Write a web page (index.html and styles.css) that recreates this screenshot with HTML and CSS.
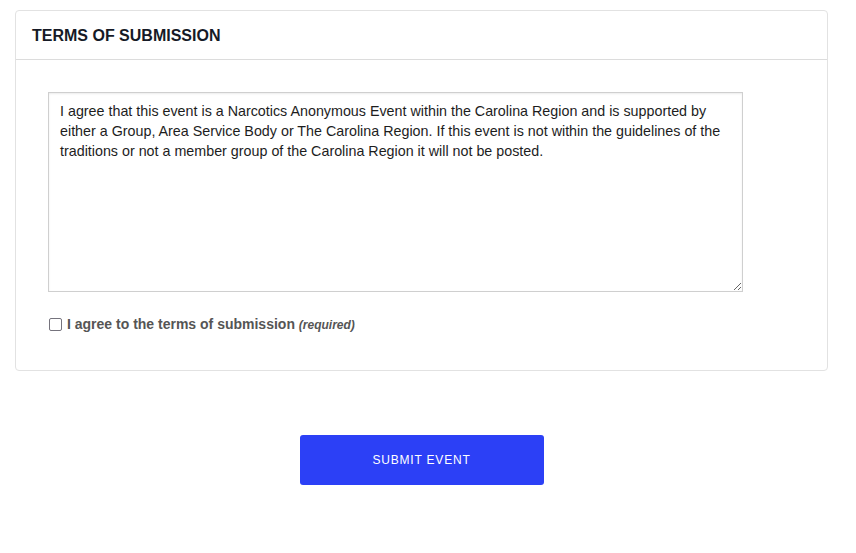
FILE: index.html
```html
<!DOCTYPE html>
<html>
<head>
<meta charset="utf-8">
<link rel="stylesheet" href="styles.css">
</head>
<body>
<div class="page">
  <section class="card">
    <header class="card-header">
      <h2 class="card-title">TERMS OF SUBMISSION</h2>
    </header>
    <div class="card-body">
      <textarea class="terms" readonly>I agree that this event is a Narcotics Anonymous Event within the Carolina Region and is supported by either a Group, Area Service Body or The Carolina Region. If this event is not within the guidelines of the traditions or not a member group of the Carolina Region it will not be posted.</textarea>
      <label class="agree">
        <span class="box"></span>
        <span class="agree-text">I agree to the terms of submission <em class="req">(required)</em></span>
      </label>
    </div>
  </section>
  <div class="actions">
    <button class="submit" type="button">SUBMIT EVENT</button>
  </div>
</div>
</body>
</html>
```
FILE: styles.css
```css
html, body {
  margin: 0;
  padding: 0;
  background: #fff;
}
body {
  font-family: "Liberation Sans", Arial, Helvetica, sans-serif;
  color: #222;
}
.page {
  padding: 10px 28px 0 15px;
}
.card {
  border: 1px solid #e2e2e2;
  border-radius: 4px;
  background: #fff;
}
.card-header {
  height: 48px;
  border-bottom: 1px solid #dcdcdc;
  display: flex;
  align-items: center;
  padding: 1px 16px 0;
  box-sizing: border-box;
  height: 49px;
}
.card-title {
  margin: 0;
  font-size: 16px;
  font-weight: 700;
  color: #161a26;
  letter-spacing: 0;
}
.card-body {
  padding: 32px 32px 37px 32px;
  display: flex;
  flex-direction: column;
  align-items: flex-start;
}
.terms {
  box-sizing: border-box;
  width: 695px;
  height: 200px;
  border: 1px solid #cfcfcf;
  box-shadow: inset 0 1px 2px rgba(0,0,0,0.08);
  padding: 8px 11px;
  font-family: "Liberation Sans", Arial, Helvetica, sans-serif;
  font-size: 14.3px;
  line-height: 20px;
  color: #1d1d1d;
  resize: both;
  margin: 0;
  outline: none;
}
.agree {
  margin-top: 24px;
  display: flex;
  align-items: center;
  gap: 5px;
  font-size: 14px;
  font-weight: 700;
  color: #555;
  line-height: 16px;
}
.box {
  width: 11px;
  height: 11px;
  border: 1px solid #75737d;
  border-radius: 2px;
  background: #fff;
  margin-left: 1px;
}
.req {
  font-size: 12px;
  font-style: italic;
  font-weight: 700;
}
.actions {
  display: flex;
  justify-content: center;
  padding-top: 64px;
}
.submit {
  width: 244px;
  height: 50px;
  border: 0;
  border-radius: 3px;
  background: #2c40f6;
  color: #fff;
  font-family: "Liberation Sans", Arial, Helvetica, sans-serif;
  font-size: 12px;
  letter-spacing: 0.8px;
  cursor: pointer;
}
```
